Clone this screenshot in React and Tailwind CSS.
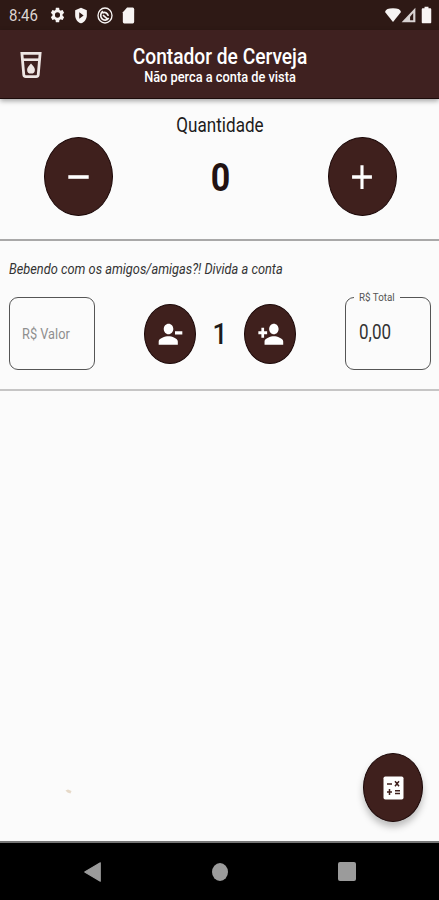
import React, { useState } from "react";

const PATHS = {
  settings:
    "M19.14 12.94c.04-.3.06-.61.06-.94 0-.32-.02-.64-.07-.94l2.03-1.58a.49.49 0 0 0 .12-.61l-1.92-3.32a.49.49 0 0 0-.59-.22l-2.39.96c-.5-.38-1.03-.7-1.62-.94l-.36-2.54a.48.48 0 0 0-.48-.41h-3.84c-.24 0-.43.17-.47.41l-.36 2.54c-.59.24-1.13.57-1.62.94l-2.39-.96a.48.48 0 0 0-.59.22L2.74 8.87c-.12.21-.08.47.12.61l2.03 1.58c-.05.3-.09.63-.09.94s.02.64.07.94l-2.03 1.58a.49.49 0 0 0-.12.61l1.92 3.32c.12.22.37.29.59.22l2.39-.96c.5.38 1.03.7 1.62.94l.36 2.54c.05.24.24.41.48.41h3.84c.24 0 .44-.17.47-.41l.36-2.54c.59-.24 1.13-.56 1.62-.94l2.39.96c.22.08.47 0 .59-.22l1.92-3.32a.48.48 0 0 0-.12-.61l-2.01-1.58zM12 15.6a3.6 3.6 0 1 1 0-7.2 3.6 3.6 0 0 1 0 7.2z",
  shield: "M12 1 2 4.5v7c0 5.500 4.500 10 10 11.500 5.500-1.500 10-6 10-11.500v-7L12 1zm-3 6.500 7.500 4.500-7.500 4.500v-9z",
  sd: "M18 2h-8L4 8v12a2 2 0 0 0 2 2h12a2 2 0 0 0 2-2V4a2 2 0 0 0-2-2z",
  wifi: "M12 22.500 0 7.500C1 3.500 5 2 12 2s11 1.500 12 5.500L12 22.500z",
  battery: "M16.670 4H14.500V2h-5v2H7.330C6.600 4 6 4.600 6 5.330v15.330C6 21.400 6.600 22 7.330 22h9.330c.74 0 1.340-.6 1.340-1.330V5.330C18 4.600 17.400 4 16.670 4z",
  minus: "M5 10.800h14v2.400H5z",
  plus: "M19 13.100h-5.900v6.400h-2.200v-6.400H5v-2.200h5.900V4.500h2.200v6.400H19z",
  personRemove:
    "M14.500 8c0-2.210-1.790-4.200-4.200-4.200S6 5.790 6 8s1.790 4.200 4.200 4.200 4.300-1.990 4.300-4.200zm1.500 1.800v2.500h6.500V9.800H16zM1.500 18v2.500h17V18c0-2.660-5.330-4.200-8.300-4.200S1.500 15.340 1.500 18z",
  personAdd:
    "M15 12.200c2.210 0 4.200-1.790 4.200-4.200S17.210 3.800 15 3.800 10.800 5.590 10.800 8s1.990 4.200 4.200 4.200zm-8.700-2.500V7H3.900v2.700H1.200v2.500h2.700V15h2.400v-2.800H9V9.700H6.300zM15 13.800c-2.670 0-8.300 1.540-8.300 4.200v2.500h16.600V18c0-2.660-5.630-4.200-8.300-4.200z",
};

function Icon({ name, className, children }) {
  return (
    <svg viewBox="0 0 24 24" preserveAspectRatio="none" fill="currentColor" className={className}>
      {name && <path d={PATHS[name]} />}
      {children}
    </svg>
  );
}

function StatusBar() {
  return (
    <div className="flex h-[30px] items-center bg-[#2e1915] pl-[9px] pr-[3px] text-[#f7f4f3]">
      <span className="w-[40px] scale-y-[1.15] text-[15px] leading-4 text-[#ddd5d3]">8:46</span>
      <Icon name="settings" className="h-[18px] w-[17px]" />
      <Icon name="shield" className="ml-[8px] h-[17px] w-[14px]" />
      <Icon className="ml-[9px] h-[17px] w-[16px]">
        <circle cx="12" cy="12" r="10.500" fill="none" stroke="currentColor" strokeWidth="2" />
        <path
          d="M17.500 15.500A6.500 6.500 0 1 1 9 6.200M8 8.500c4-2 8 0 9 4M9 11.500l6 5"
          fill="none"
          stroke="currentColor"
          strokeWidth="2.500"
        />
      </Icon>
      <Icon name="sd" className="ml-[7px] h-[19px] w-[17px]" />
      <span className="flex-1" />
      <Icon name="wifi" className="h-[16px] w-[16px]" />
      <Icon className="h-[16px] w-[15px]">
        <path d="M23 1v22H1L23 1z" fillOpacity="0.85" />
        <path d="M19.500 9v11h-5v-5.500z" fill="#2e1915" />
      </Icon>
      <Icon name="battery" className="ml-px h-[20px] w-[19px]" />
    </div>
  );
}

function RoundButton({ onClick, className, children }) {
  return (
    <button
      onClick={onClick}
      className={`flex shrink-0 items-center justify-center rounded-[50%] border border-[#1c0808] bg-[#3f201d] text-white ${className}`}
    >
      {children}
    </button>
  );
}

function App() {
  const [count, setCount] = useState(0);
  const [people, setPeople] = useState(1);
  const [price, setPrice] = useState("");

  const total = (count * (parseFloat(price.replace(",", ".")) || 0)) / people;

  return (
    <div className="flex h-screen w-full flex-col overflow-hidden bg-[#fbfbfb] font-['Roboto',sans-serif] text-[#1d1b1b]">
      <StatusBar />

      <header className="z-10 grid h-[69px] grid-cols-[60px_1fr_60px] items-center border-b border-[#1c0b0a] bg-[#3f2120] text-white shadow-[0_2px_5px_rgba(0,0,0,0.35)]">
        <button className="ml-[20px] mt-[2px] h-[28px] w-[22px]" onClick={() => setCount(0)}>
          <svg viewBox="0 0 22 28" className="h-full w-full text-[#eee6e4]">
            <path d="M1.900 2.300h18.200l-1.900 21.700a2 2 0 0 1-2 1.600H5.800a2 2 0 0 1-2-1.600L1.900 2.300z" fill="none" stroke="currentColor" strokeWidth="2.800" />
            <path d="M2 8.700h18" stroke="currentColor" strokeWidth="2.600" />
            <path d="M11 12.500c2.200 2.800 3.900 4 3.900 6.200a3.900 3.900 0 0 1-7.800 0c0-2.200 1.700-3.400 3.900-6.200z" fill="currentColor" />
          </svg>
        </button>
        <div className="mt-[3px] flex flex-col items-center whitespace-nowrap">
          <h1 className="scale-y-[1.15] pl-px text-[19.200px] font-medium leading-[24px]">Contador de Cerveja</h1>
          <p className="scale-y-[1.12] pl-px text-[12.800px] font-medium leading-[18px]">Não perca a conta de vista</p>
        </div>
      </header>

      <section className="flex h-[142px] flex-col border-b-2 border-[#a9a8a8] pt-[15px]">
        <h2 className="scale-y-[1.16] pl-px text-center text-[17.100px] leading-[22px]">Quantidade</h2>
        <div className="mt-px flex items-center justify-between pl-[44px] pr-[42px]">
          <RoundButton className="h-[79px] w-[69px]" onClick={() => setCount(Math.max(0, count - 1))}>
            <Icon name="minus" className="h-[36px] w-[35px]" />
          </RoundButton>
          <span className="scale-y-[1.15] text-[34px] font-bold leading-10 text-[#221212]">{count}</span>
          <RoundButton className="h-[79px] w-[69px]" onClick={() => setCount(count + 1)}>
            <Icon name="plus" className="h-[38px] w-[34px]" />
          </RoundButton>
        </div>
      </section>

      <section className="h-[150px] border-b-2 border-[#c6c5c5] px-[9px] pt-[18px]">
        <p className="origin-left scale-y-[1.14] whitespace-nowrap text-[12.800px] italic leading-[20px] text-[#333]">
          Bebendo com os amigos/amigas?! Divida a conta
        </p>
        <div className="-mr-px mt-[18px] flex items-center justify-between">
          <label className="flex h-[73px] w-[86px] items-center rounded-[9px] border border-[#555] pl-[12px]">
            <input
              value={price}
              onChange={(e) => setPrice(e.target.value)}
              placeholder="R$ Valor"
              className="w-[64px] scale-y-[1.15] text-[12.800px] leading-5 outline-none placeholder:text-[#8f8f8f]"
            />
          </label>
          <div className="flex items-center">
            <RoundButton className="h-[60px] w-[52px]" onClick={() => setPeople(Math.max(1, people - 1))}>
              <Icon name="personRemove" className="h-[30px] w-[27px]" />
            </RoundButton>
            <span className="w-[48px] scale-y-[1.15] text-center text-[26px] font-medium leading-8">{people}</span>
            <RoundButton className="h-[60px] w-[52px]" onClick={() => setPeople(people + 1)}>
              <Icon name="personAdd" className="h-[30px] w-[27px]" />
            </RoundButton>
          </div>
          <div className="relative flex h-[73px] w-[86px] items-center rounded-[9px] border border-[#555] pl-[12px]">
            <span className="absolute -top-[8px] left-[8px] bg-[#fbfbfb] px-[5px] text-[#555]">
              <span className="block scale-y-[1.14] whitespace-nowrap text-[9.800px] leading-[16px]">R$ Total</span>
            </span>
            <span className="-mt-[4px] scale-y-[1.16] pl-px text-[17px] leading-5 text-[#333]">{total.toFixed(2).replace(".", ",")}</span>
          </div>
        </div>
      </section>

      <main className="flex flex-1 items-end justify-between pb-[19px] pl-[65px] pr-[16px]">
        <svg viewBox="0 0 7 5" className="mb-[28px] h-[5px] w-[7px]">
          <path d="M0.500 1.500 3 0.500l3.500 1.500-1 2.500-3-1z" fill="#e6d9c8" />
        </svg>
        <RoundButton className="h-[69px] w-[60px] shadow-[0_5px_7px_rgba(0,0,0,0.25)]">
          <svg viewBox="0 0 21 24" className="h-[24px] w-[21px]">
            <rect width="20" height="23" x="0.500" y="0.500" rx="1.800" fill="currentColor" />
            <path
              d="M4 8h5M12 5.300l4 5M16 5.300l-4 5M4 16h5M6.500 13v6M12 14.800h5M12 17.500h5"
              stroke="#3f201d"
              strokeWidth="1.500"
            />
          </svg>
        </RoundButton>
      </main>

      <nav className="flex h-[59px] shrink-0 items-center justify-between border-t-2 border-[#777] bg-black pl-[84px] pr-[83px] text-[#9b9b9b]">
        <Icon className="h-[20px] w-[17px]">
          <path d="M1 12 23 1v22z" stroke="currentColor" strokeWidth="1.500" strokeLinejoin="round" />
        </Icon>
        <span className="h-[18px] w-[16px] rounded-[50%] bg-current" />
        <span className="h-[19px] w-[18px] rounded-[2px] bg-current" />
      </nav>
    </div>
  );
}

export default App;
